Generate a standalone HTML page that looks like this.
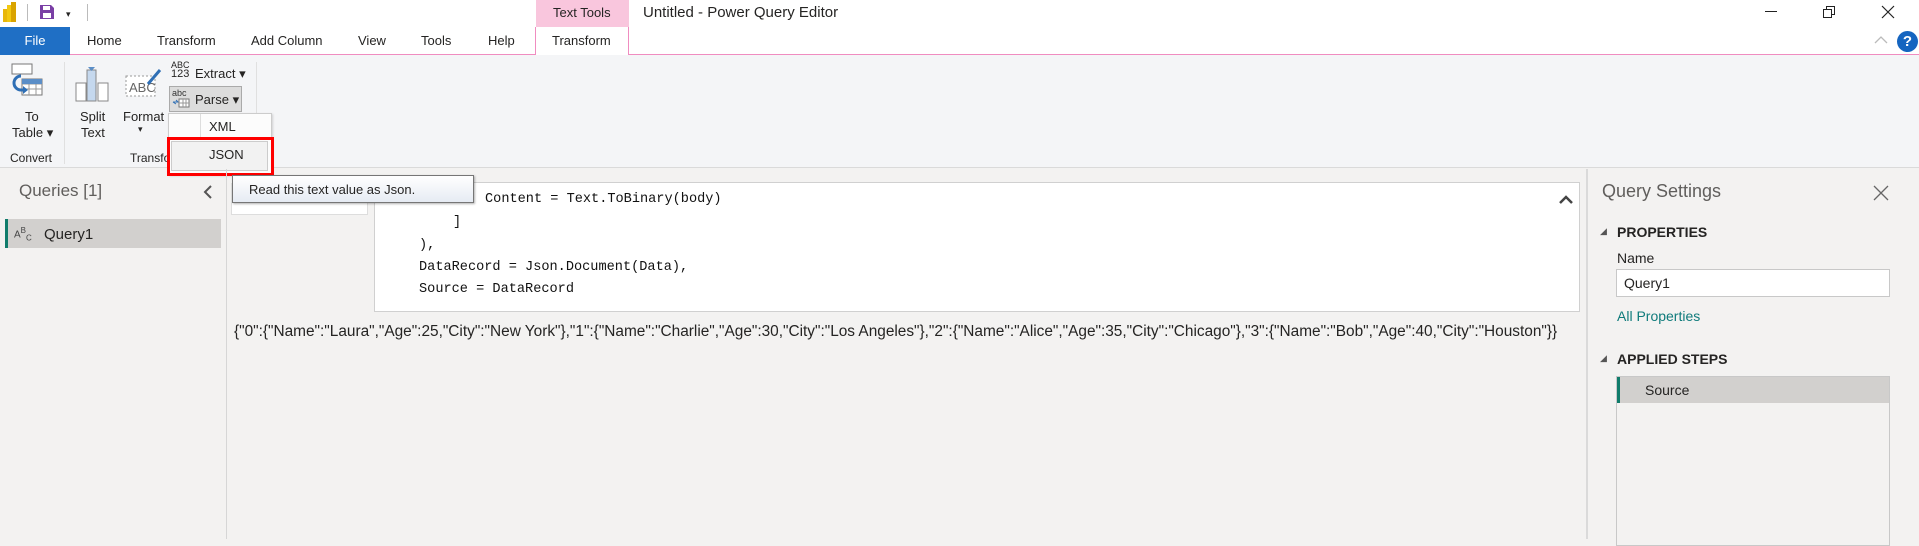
<!DOCTYPE html>
<html><head><meta charset="utf-8"><style>
*{margin:0;padding:0;box-sizing:border-box}
body{width:1919px;height:539px;overflow:hidden;position:relative;background:#f3f2f1;font-family:"Liberation Sans",sans-serif;color:#252423}
.a{position:absolute;white-space:nowrap}
.t{font-size:13px;color:#252423}
.mono{font-family:"Liberation Mono",monospace;font-size:13.6px;color:#111}
</style></head><body>
<div class="a" style="left:0;top:0;width:1919px;height:54px;background:#fff"></div>
<div class="a" style="left:0;top:54px;width:1919px;height:1px;background:#f08cc0"></div>
<div class="a" style="left:3px;top:9px;width:4px;height:13px;background:#e8b70a"></div>
<div class="a" style="left:7px;top:5px;width:4px;height:17px;background:#f2c811"></div>
<div class="a" style="left:11px;top:2px;width:5px;height:20px;background:#d9a300"></div>
<div class="a" style="left:27px;top:4px;width:1px;height:17px;background:#bbb"></div>
<svg class="a" style="left:39px;top:4px" width="16" height="16"><path d="M1 1h11l3 3v11H1z" fill="#7a3fa5"/><rect x="4" y="2" width="7" height="4" fill="#fff"/><rect x="4" y="9" width="8" height="5" fill="#fff"/></svg>
<div class="a" style="left:66px;top:9px;font-size:9px">▾</div>
<div class="a" style="left:87px;top:4px;width:1px;height:17px;background:#bbb"></div>
<div class="a" style="left:536px;top:0;width:93px;height:27px;background:#f9c6dd"></div>
<div class="a t" style="left:553px;top:5px;font-size:13px">Text Tools</div>
<div class="a" style="left:643px;top:4px;font-size:15px">Untitled - Power Query Editor</div>
<div class="a" style="left:1765px;top:11px;width:12px;height:1px;background:#222"></div>
<svg class="a" style="left:1822px;top:5px" width="14" height="14"><path d="M1.5 4.5h8v8h-8zM4.5 4.5v-3h8v8h-3" fill="none" stroke="#222"/></svg>
<svg class="a" style="left:1881px;top:5px" width="14" height="14"><path d="M1 1l12 12M13 1L1 13" stroke="#222" stroke-width="1.2"/></svg>
<svg class="a" style="left:1874px;top:35px" width="14" height="10"><path d="M1 8l6-6 6 6" fill="none" stroke="#bbb" stroke-width="1.3"/></svg>
<div class="a" style="left:1897px;top:31px;width:21px;height:21px;border-radius:50%;background:#1565c0;color:#fff;font-weight:bold;font-size:15px;text-align:center;line-height:21px">?</div>
<div class="a" style="left:0;top:27px;width:70px;height:28px;background:#1f6fc5;color:#fff;font-size:13px;text-align:center;line-height:28px">File</div>
<div class="a t" style="left:87px;top:33px">Home</div>
<div class="a t" style="left:157px;top:33px">Transform</div>
<div class="a t" style="left:251px;top:33px">Add Column</div>
<div class="a t" style="left:358px;top:33px">View</div>
<div class="a t" style="left:421px;top:33px">Tools</div>
<div class="a t" style="left:488px;top:33px">Help</div>
<div class="a" style="left:535px;top:27px;width:94px;height:29px;background:#fff;border-left:1px solid #f08cc0;border-right:1px solid #f08cc0"></div>
<div class="a t" style="left:552px;top:33px">Transform</div>
<div class="a" style="left:0;top:55px;width:1919px;height:113px;background:#f4f5f7;border-bottom:1px solid #dadada"></div>
<svg class="a" style="left:11px;top:63px" width="32" height="34"><rect x="1" y="1" width="20" height="10" fill="#fff" stroke="#777"/><rect x="11" y="16" width="20" height="16" fill="#fff" stroke="#777"/><path d="M11 21h20M11 26h20M18 16v16M25 16v16" stroke="#999"/><rect x="11" y="16" width="20" height="5" fill="#5b8ec7"/><path d="M10 13a7 7 0 0 0 0 14h4" fill="none" stroke="#2f6fb5" stroke-width="3"/><path d="M12 23l5 4-5 4z" fill="#2f6fb5"/></svg>
<div class="a t" style="left:25px;top:109px">To</div>
<div class="a t" style="left:12px;top:125px">Table ▾</div>
<div class="a t" style="left:10px;top:151px;font-size:12px">Convert</div>
<div class="a" style="left:64px;top:62px;width:1px;height:102px;background:#e0e0e0"></div>
<svg class="a" style="left:74px;top:66px" width="36" height="36"><rect x="2" y="17" width="10" height="18" fill="#fff" stroke="#888"/><rect x="13" y="4" width="9" height="31" fill="#c5d8ee" stroke="#888"/><rect x="24" y="17" width="10" height="18" fill="#fff" stroke="#888"/><path d="M14 1h7l-3.5 4z" fill="#5b8ec7"/></svg>
<div class="a t" style="left:80px;top:109px">Split</div>
<div class="a t" style="left:81px;top:125px">Text</div>
<svg class="a" style="left:124px;top:64px" width="40" height="36"><rect x="2" y="12" width="29" height="20" fill="#fff" stroke="#999" stroke-dasharray="2 2"/><text x="5" y="28" font-size="13" font-family="Liberation Sans" fill="#666">ABC</text><path d="M24 20l12-14" stroke="#2f6fb5" stroke-width="3"/></svg>
<div class="a t" style="left:123px;top:109px">Format</div>
<div class="a" style="left:138px;top:124px;font-size:9px">▾</div>
<div class="a" style="left:130px;top:151px;font-size:12px">Transfo</div>
<div class="a" style="left:171px;top:61px;font-size:9px;line-height:9px">ABC<br><span style="font-size:11px">123</span></div>
<div class="a t" style="left:195px;top:66px">Extract ▾</div>
<div class="a" style="left:169px;top:86px;width:73px;height:26px;background:#dcdcdc;border:1px solid #aaa"></div>
<div class="a" style="left:172px;top:88px;font-size:9px;color:#333">abc</div>
<svg class="a" style="left:172px;top:98px" width="18" height="10"><path d="M1 4h5l-2-2M1 4l3 2" stroke="#2f6fb5" fill="none"/><rect x="7" y="1" width="10" height="8" fill="#fff" stroke="#777"/><path d="M7 5h10M11 1v8M14 1v8" stroke="#999"/></svg>
<div class="a t" style="left:195px;top:92px">Parse ▾</div>
<div class="a" style="left:256px;top:62px;width:1px;height:102px;background:#e0e0e0"></div>
<div class="a" style="left:168px;top:113px;width:104px;height:62px;background:#fcfcfc;border:1px solid #ccc;box-shadow:1px 1px 2px rgba(0,0,0,.15)"></div>
<div class="a" style="left:200px;top:114px;width:1px;height:24px;background:#ddd"></div>
<div class="a t" style="left:209px;top:119px">XML</div>
<div class="a" style="left:171px;top:141px;width:97px;height:30px;background:#f2f2f2;border:1px solid #ccc"></div>
<div class="a t" style="left:209px;top:147px">JSON</div>
<div class="a" style="left:167px;top:137px;width:107px;height:39px;border:3px solid #f00"></div>
<div class="a" style="left:226px;top:169px;width:1px;height:370px;background:#d6d6d6"></div>
<div class="a" style="left:19px;top:181px;font-size:17px;color:#605e5c;font-weight:300">Queries [1]</div>
<svg class="a" style="left:203px;top:185px" width="10" height="14"><path d="M8 1L2 7l6 6" fill="none" stroke="#555" stroke-width="2"/></svg>
<div class="a" style="left:5px;top:219px;width:216px;height:29px;background:#d2d0ce;border-left:3px solid #107c6b"></div>
<div class="a" style="left:14px;top:226px;font-size:10px;color:#444">A<sup style="font-size:8px">B</sup><sub style="font-size:8px">C</sub></div>
<div class="a" style="left:44px;top:226px;font-size:15px">Query1</div>
<div class="a" style="left:231px;top:183px;width:137px;height:32px;background:#fff;border:1px solid #ddd"></div>
<div class="a" style="left:374px;top:182px;width:1206px;height:130px;background:#fff;border:1px solid #d0d0d0"></div>
<svg class="a" style="left:1558px;top:194px" width="16" height="12"><path d="M2 9l6-6 6 6" fill="none" stroke="#444" stroke-width="2.5"/></svg>
<div class="a mono" style="left:485px;top:192px">Content = Text.ToBinary(body)</div>
<div class="a mono" style="left:453px;top:215px">]</div>
<div class="a mono" style="left:419px;top:238px">),</div>
<div class="a mono" style="left:419px;top:260px">DataRecord = Json.Document(Data),</div>
<div class="a mono" style="left:419px;top:282px">Source = DataRecord</div>
<div class="a" style="left:234px;top:323px;font-size:15.4px">{"0":{"Name":"Laura","Age":25,"City":"New York"},"1":{"Name":"Charlie","Age":30,"City":"Los Angeles"},"2":{"Name":"Alice","Age":35,"City":"Chicago"},"3":{"Name":"Bob","Age":40,"City":"Houston"}}</div>
<div class="a" style="left:232px;top:175px;width:242px;height:28px;background:linear-gradient(#fff,#e6ebf3);border:1px solid #767676;box-shadow:1px 1px 2px rgba(0,0,0,.3)"></div>
<div class="a t" style="left:249px;top:182px">Read this text value as Json.</div>
<div class="a" style="left:1586px;top:169px;width:2px;height:370px;background:#dadada"></div>
<div class="a" style="left:1602px;top:181px;font-size:18px;color:#605e5c">Query Settings</div>
<svg class="a" style="left:1873px;top:185px" width="16" height="16"><path d="M1 1l14 14M15 1L1 15" stroke="#666" stroke-width="1.3"/></svg>
<div class="a" style="left:1600px;top:226px;font-size:9px;color:#555">◢</div>
<div class="a" style="left:1617px;top:224px;font-size:14px;font-weight:bold;color:#252423">PROPERTIES</div>
<div class="a" style="left:1617px;top:250px;font-size:14px">Name</div>
<div class="a" style="left:1616px;top:269px;width:274px;height:28px;background:#fff;border:1px solid #c8c8c8"></div>
<div class="a" style="left:1624px;top:275px;font-size:14px">Query1</div>
<div class="a" style="left:1617px;top:308px;font-size:14px;color:#0f7b7b">All Properties</div>
<div class="a" style="left:1600px;top:353px;font-size:9px;color:#555">◢</div>
<div class="a" style="left:1617px;top:351px;font-size:14px;font-weight:bold">APPLIED STEPS</div>
<div class="a" style="left:1616px;top:376px;width:274px;height:170px;border:1px solid #c8c8c8"></div>
<div class="a" style="left:1617px;top:377px;width:272px;height:26px;background:#d2d0ce;border-left:3px solid #107c6b"></div>
<div class="a" style="left:1645px;top:382px;font-size:14px">Source</div>
</body></html>
